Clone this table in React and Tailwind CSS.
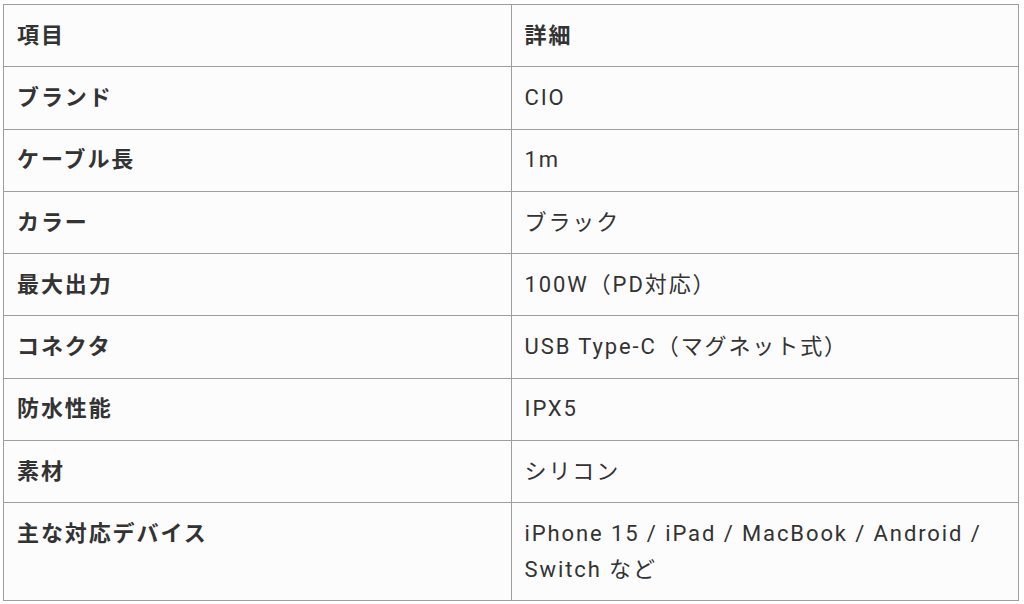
import React from "react";

const rows = [
  ["ブランド", "CIO"],
  ["ケーブル長", "1m"],
  ["カラー", "ブラック"],
  ["最大出力", "100W（PD対応）"],
  ["コネクタ", "USB Type-C（マグネット式）"],
  ["防水性能", "IPX5"],
  ["素材", "シリコン"],
  ["主な対応デバイス", "iPhone 15 / iPad / MacBook / Android / Switch など"],
];

const cell =
  "border border-[#9e9e9e] px-[13px] py-[12.75px] align-top text-left w-1/2";

export default function App() {
  return (
    <div className="min-h-screen bg-white pl-[3px] pt-[4px] pr-[5px]">
      <table
        className="w-[1016px] border-collapse table-fixed bg-[#fcfcfc] text-[#333333] text-[22px] leading-[35.75px] tracking-[1.9px]"
        style={{ fontFamily: 'Roboto, "Noto Sans CJK JP", sans-serif' }}
      >
        <thead>
          <tr>
            <th className={`${cell} font-bold`}>項目</th>
            <th className={`${cell} font-bold`}>詳細</th>
          </tr>
        </thead>
        <tbody>
          {rows.map(([k, v]) => (
            <tr key={k}>
              <td className={`${cell} font-bold`}>{k}</td>
              <td className={`${cell} font-normal`}>{v}</td>
            </tr>
          ))}
        </tbody>
      </table>
    </div>
  );
}
